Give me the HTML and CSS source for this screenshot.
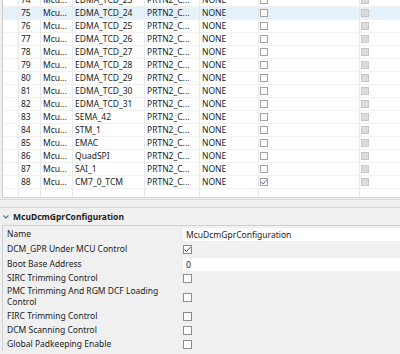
FILE: index.html
```html
<!DOCTYPE html>
<html lang="en">
<head>
    <meta charset="UTF-8">
    <title>McuDcmGprConfiguration</title>
    <link rel="stylesheet" href="styles.css">
</head>
<body>
    <div class="grid-wrap">
        <div class="grid">
            <div class="row"><div class="c"></div><div class="c">74</div><div class="c">Mcu...</div><div class="c">EDMA_TCD_23</div><div class="c">PRTN2_C...</div><div class="c">NONE</div><div class="c"><span class="box"></span></div><div class="c"><span class="box off"></span></div></div>
            <div class="row sel"><div class="c"></div><div class="c">75</div><div class="c">Mcu...</div><div class="c">EDMA_TCD_24</div><div class="c">PRTN2_C...</div><div class="c">NONE</div><div class="c"><span class="box"></span></div><div class="c"><span class="box off"></span></div></div>
            <div class="row"><div class="c"></div><div class="c">76</div><div class="c">Mcu...</div><div class="c">EDMA_TCD_25</div><div class="c">PRTN2_C...</div><div class="c">NONE</div><div class="c"><span class="box"></span></div><div class="c"><span class="box off"></span></div></div>
            <div class="row"><div class="c"></div><div class="c">77</div><div class="c">Mcu...</div><div class="c">EDMA_TCD_26</div><div class="c">PRTN2_C...</div><div class="c">NONE</div><div class="c"><span class="box"></span></div><div class="c"><span class="box off"></span></div></div>
            <div class="row"><div class="c"></div><div class="c">78</div><div class="c">Mcu...</div><div class="c">EDMA_TCD_27</div><div class="c">PRTN2_C...</div><div class="c">NONE</div><div class="c"><span class="box"></span></div><div class="c"><span class="box off"></span></div></div>
            <div class="row"><div class="c"></div><div class="c">79</div><div class="c">Mcu...</div><div class="c">EDMA_TCD_28</div><div class="c">PRTN2_C...</div><div class="c">NONE</div><div class="c"><span class="box"></span></div><div class="c"><span class="box off"></span></div></div>
            <div class="row"><div class="c"></div><div class="c">80</div><div class="c">Mcu...</div><div class="c">EDMA_TCD_29</div><div class="c">PRTN2_C...</div><div class="c">NONE</div><div class="c"><span class="box"></span></div><div class="c"><span class="box off"></span></div></div>
            <div class="row"><div class="c"></div><div class="c">81</div><div class="c">Mcu...</div><div class="c">EDMA_TCD_30</div><div class="c">PRTN2_C...</div><div class="c">NONE</div><div class="c"><span class="box"></span></div><div class="c"><span class="box off"></span></div></div>
            <div class="row"><div class="c"></div><div class="c">82</div><div class="c">Mcu...</div><div class="c">EDMA_TCD_31</div><div class="c">PRTN2_C...</div><div class="c">NONE</div><div class="c"><span class="box"></span></div><div class="c"><span class="box off"></span></div></div>
            <div class="row"><div class="c"></div><div class="c">83</div><div class="c">Mcu...</div><div class="c">SEMA_42</div><div class="c">PRTN2_C...</div><div class="c">NONE</div><div class="c"><span class="box"></span></div><div class="c"><span class="box off"></span></div></div>
            <div class="row"><div class="c"></div><div class="c">84</div><div class="c">Mcu...</div><div class="c">STM_1</div><div class="c">PRTN2_C...</div><div class="c">NONE</div><div class="c"><span class="box"></span></div><div class="c"><span class="box off"></span></div></div>
            <div class="row"><div class="c"></div><div class="c">85</div><div class="c">Mcu...</div><div class="c">EMAC</div><div class="c">PRTN2_C...</div><div class="c">NONE</div><div class="c"><span class="box"></span></div><div class="c"><span class="box off"></span></div></div>
            <div class="row"><div class="c"></div><div class="c">86</div><div class="c">Mcu...</div><div class="c">QuadSPI</div><div class="c">PRTN2_C...</div><div class="c">NONE</div><div class="c"><span class="box"></span></div><div class="c"><span class="box off"></span></div></div>
            <div class="row"><div class="c"></div><div class="c">87</div><div class="c">Mcu...</div><div class="c">SAI_1</div><div class="c">PRTN2_C...</div><div class="c">NONE</div><div class="c"><span class="box"></span></div><div class="c"><span class="box off"></span></div></div>
            <div class="row"><div class="c"></div><div class="c">88</div><div class="c">Mcu...</div><div class="c">CM7_0_TCM</div><div class="c">PRTN2_C...</div><div class="c">NONE</div><div class="c"><span class="box"><svg class="tick blue" viewBox="0 0 8 8"><polyline points="1.2,4 3.2,6 7,1.5"/></svg></span></div><div class="c"><span class="box off"></span></div></div>
            <div class="row empty"><div class="c"></div><div class="c"></div><div class="c"></div><div class="c"></div><div class="c"></div><div class="c"></div><div class="c"></div><div class="c"></div></div>
        </div>
    </div>

    <div class="sash"></div>

    <div class="section-head">
        <svg class="chevron" viewBox="0 0 6 4"><polyline points="0.5,0.5 3,3 5.5,0.5"/></svg>
        <span>McuDcmGprConfiguration</span>
    </div>

    <div class="form">
        <div class="field"><div class="label">Name</div><div class="value"><div class="input">McuDcmGprConfiguration</div></div></div>
        <div class="field tall"><div class="label">DCM_GPR Under MCU Control</div><div class="value"><span class="check"><svg class="tick" viewBox="0 0 9 9"><polyline points="1.5,4.5 3.6,6.6 7.5,2"/></svg></span></div></div>
        <div class="field"><div class="label">Boot Base Address</div><div class="value"><div class="input">0</div></div></div>
        <div class="field"><div class="label">SIRC Trimming Control</div><div class="value"><span class="check"></span></div></div>
        <div class="field two"><div class="label">PMC Trimming And RGM DCF Loading Control</div><div class="value"><span class="check"></span></div></div>
        <div class="field"><div class="label">FIRC Trimming Control</div><div class="value"><span class="check"></span></div></div>
        <div class="field"><div class="label">DCM Scanning Control</div><div class="value"><span class="check"></span></div></div>
        <div class="field"><div class="label">Global Padkeeping Enable</div><div class="value"><span class="check"></span></div></div>
    </div>
</body>
</html>
```

FILE: styles.css
```css
body {
    margin: 0;
    background: #f0f0f0;
    font-family: "Noto Sans", "Open Sans", sans-serif;
    font-size: 8.5px;
    color: #222;
    width: 400px;
    height: 354px;
    overflow: hidden;
}

/* table */
.grid-wrap {
    margin-left: 2px;
    height: 197px;
    overflow: hidden;
    background: #fff;
    border-left: 1px solid #c9c9c9;
    border-bottom: 1px solid #d6d6d6;
}
.grid {
    margin-top: -6px;
}
.row {
    display: grid;
    grid-template-columns: 16px 22px 32px 72px 55px 59px 101px 1fr;
    height: 13px;
    box-sizing: border-box;
    border-bottom: 1px solid #f1f1f1;
}
.row.sel {
    background: #e5f1fb;
}
.row.empty {
    border-bottom: none;
}
.c {
    border-right: 1px solid #e8e8e8;
    padding-left: 2px;
    line-height: 12px;
    white-space: nowrap;
    overflow: hidden;
    display: flex;
    align-items: center;
}
.c:last-child {
    border-right: none;
}
.box {
    width: 8px;
    height: 8px;
    box-sizing: border-box;
    border: 1px solid #a3a3a3;
    background: #fff;
    margin-left: -1px;
    position: relative;
}
.box.off {
    background: #dcdcdc;
    border-color: #c6c6c6;
}
.tick {
    position: absolute;
    left: -1px;
    top: -1px;
    width: 8px;
    height: 8px;
    fill: none;
    stroke: #444;
    stroke-width: 1;
}
.tick.blue {
    stroke: #3f6fb5;
}

/* splitter */
.sash {
    margin-top: 1px;
    height: 7px;
    border-top: 1px solid #d9d9d9;
    border-bottom: 1px solid #d9d9d9;
}

.section-head {
    height: 17px;
    display: flex;
    align-items: center;
    gap: 4px;
    padding-left: 3px;
    font-weight: bold;
    font-size: 8.5px;
    color: #1e1e1e;
}
.chevron {
    width: 6px;
    height: 4px;
    fill: none;
    stroke: #3d7f8d;
    stroke-width: 1.1;
}

/* properties */
.form {
    margin-left: 2px;
    border-left: 1px solid #d0d0d0;
    border-top: 1px solid #d0d0d0;
    padding-top: 1px;
}
.field {
    display: grid;
    grid-template-columns: 180px 1fr;
    align-items: center;
    min-height: 14px;
}
.field.tall {
    min-height: 16px;
}
.field.two {
    min-height: 24px;
}
.label {
    padding-left: 4px;
    line-height: 10.6px;
    padding-right: 6px;
}
.value {
    display: flex;
    align-items: center;
}
.input {
    flex: 1;
    height: 13px;
    line-height: 13px;
    background: #fff;
    padding-left: 3px;
    white-space: nowrap;
}
.check {
    width: 9px;
    height: 9px;
    box-sizing: border-box;
    border: 1px solid #8c8c8c;
    background: #fff;
    position: relative;
}
.check .tick {
    width: 9px;
    height: 9px;
}
```
